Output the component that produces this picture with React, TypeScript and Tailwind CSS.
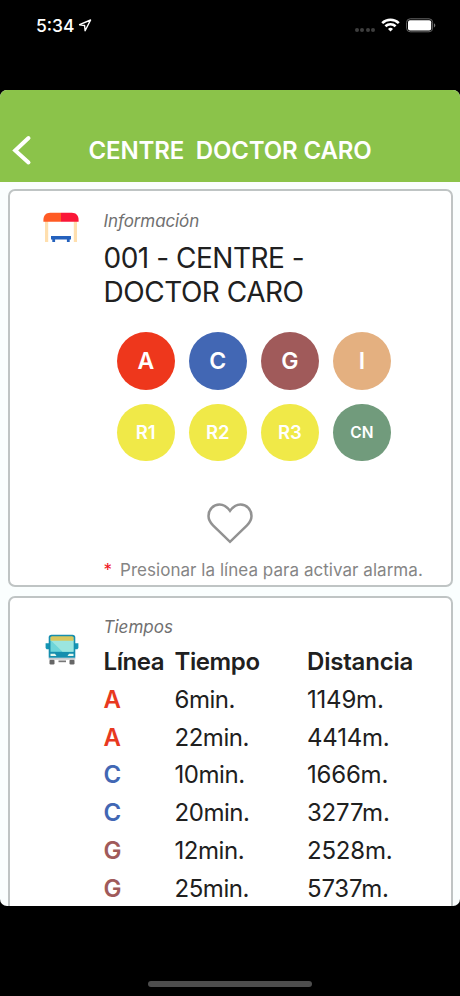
import React from "react";

const lines = [
  { label: "A", className: "bg-[#ee371c] text-[23px] pt-px" },
  { label: "C", className: "bg-[#4267b4] text-[23px] pt-px" },
  { label: "G", className: "bg-[#a05a5a] text-[23px] pt-px" },
  { label: "I", className: "bg-[#e4b080] text-[23px] pt-px" },
  { label: "R1", className: "bg-[#f0e948] text-[18.500px] pt-px" },
  { label: "R2", className: "bg-[#f0e948] text-[18.500px] pt-px" },
  { label: "R3", className: "bg-[#f0e948] text-[18.500px] pt-px" },
  { label: "CN", className: "bg-[#719b7c] text-[15.500px]" },
];

const times = [
  { line: "A", color: "text-[#e8391f]", time: "6min.", distance: "1149m." },
  { line: "A", color: "text-[#e8391f]", time: "22min.", distance: "4414m." },
  { line: "C", color: "text-[#4267b4]", time: "10min.", distance: "1666m." },
  { line: "C", color: "text-[#4267b4]", time: "20min.", distance: "3277m." },
  { line: "G", color: "text-[#a05a5a]", time: "12min.", distance: "2528m." },
  { line: "G", color: "text-[#a05a5a]", time: "25min.", distance: "5737m." },
];

function StatusBar() {
  return (
    <div className="flex h-[90px] shrink-0 items-start pl-9 pr-6 pt-[14px] text-white">
      <span className="w-[39px] text-[17.500px] font-medium leading-6">5:34</span>
      <svg className="ml-[3px] mt-[5px] h-[14px] w-[14px]" viewBox="0 0 14 14" fill="none" stroke="white" strokeWidth="1.4" strokeLinejoin="round">
        <path d="M12.600 1 1.600 5.700l5 .8.500 5.300z" />
      </svg>
      <div className="ml-auto flex items-start">
        <div className="mt-[14px] flex gap-[1.5px]">
          {[0, 1, 2, 3].map((dot) => (
            <span key={dot} className="size-1 rounded-full bg-[#3e3e3e]" />
          ))}
        </div>
        <svg className="ml-[6px] mt-1 h-[14px] w-[19px]" viewBox="0 0 19 14" fill="none" stroke="white" strokeWidth="2.6">
          <path d="M1.2 5.1a12 12 0 0 1 16.6 0" />
          <path d="M4.4 8.3a7.4 7.4 0 0 1 10.2 0" />
          <path d="m9.5 13.5-2.5-2.6a3.7 3.7 0 0 1 5 0z" fill="white" stroke="none" />
        </svg>
        <svg className="ml-[6px] mt-1 h-[15px] w-[30px]" viewBox="0 0 30 15">
          <rect x="0.6" y="0.8" width="26" height="13" rx="3.6" fill="none" stroke="#666" strokeWidth="1" />
          <rect x="2" y="2.2" width="23.2" height="10.2" rx="2" fill="white" />
          <path d="M28 5.2c1.8.8 1.8 3.4 0 4.2z" fill="#777" />
        </svg>
      </div>
    </div>
  );
}

function StopIcon() {
  return (
    <svg className="h-[31px] w-9" viewBox="0 0 36 31">
      <path d="M2 9h3.2v21H2zM30.8 9H34v21h-3.2z" fill="#ffdfae" />
      <path d="M.4 9.8V8C.4 3.6 3 .8 7.2.8H18v9z" fill="#ff5b24" />
      <path d="M18 .8h10.8c4.2 0 6.8 2.8 6.8 7.2v1.8H18z" fill="#fa1737" />
      <path d="M8 24h20v3.600h-1.300V30h-2.800v-2.400H12.100V30H9.300v-2.400H8z" fill="#2461bd" />
    </svg>
  );
}

function BusIcon() {
  return (
    <svg className="h-[31px] w-[34px]" viewBox="0 0 34 31">
      <path d="M.6 9.200h4v6h-3l-1-1.200zM33.400 9.200h-4v6h3l1-1.200z" fill="#1596b5" />
      <rect x="4.500" y="25.500" width="5" height="5" rx="1.200" fill="#666" />
      <rect x="24.500" y="25.500" width="5" height="5" rx="1.200" fill="#666" />
      <path d="M13.500 26.500h7.500v1.700h-7.500z" fill="#777" />
      <rect x="3.500" y="23.800" width="27" height="2" rx="1" fill="#c7cbd0" />
      <path d="M6.500.8h21c1.700 0 2.800 1 2.800 2.800v20.100H3.700V3.600C3.700 1.800 4.800.8 6.500.8z" fill="#168eae" />
      <path d="M5.500 3h23v14.800h-23z" fill="#6dd5d9" />
      <path d="m5.500 6 12 11.800h11V6z" fill="#9be5df" />
      <path d="M7 2.300h20q1.500 0 1.500 1.500v3h-23v-3q0-1.500 1.500-1.500z" fill="#d8c75d" />
      <path d="M5.500 19.800h4.500l1.500 2.200h-6zM28.500 19.800H24L22.500 22h6z" fill="#e5f8ed" />
    </svg>
  );
}

export default function App() {
  return (
    <div className="flex h-[996px] w-[460px] flex-col overflow-hidden bg-black font-['Inter','Liberation_Sans',sans-serif] text-[#202020]">
      <StatusBar />
      <div className="flex h-[816px] shrink-0 flex-col overflow-hidden rounded-[7px] bg-[#fafefe]">
        <header className="flex h-[92px] shrink-0 items-end bg-[#8bc34a] text-white">
          <svg className="mb-4 ml-3 h-[31px] w-5 shrink-0" viewBox="0 0 20 31" fill="none" stroke="white" strokeWidth="4" strokeLinecap="round">
            <path d="M16.500 3 3.200 15.500l13.300 12" />
          </svg>
          <h1 className="mb-[15px] ml-[56.500px] whitespace-pre text-2xl font-semibold leading-8 tracking-[-0.150px]">CENTRE  DOCTOR CARO</h1>
        </header>
        <main className="flex flex-col gap-[9px] px-[7.500px] pt-[7px]">
          <section className="flex h-[398px] shrink-0 rounded-[7px] border-2 border-[#bfc4c4] bg-white">
            <div className="w-[94px] shrink-0 pl-[33px] pt-[21px]">
              <StopIcon />
            </div>
            <div className="flex flex-1 flex-col pt-[19px]">
              <p className="text-[17px] italic leading-[22px] tracking-[-0.1px] text-[#707070]">Información</p>
              <h2 className="mt-[9px] text-[28px] leading-[34px] tracking-[-0.480px]">
                001 - CENTRE -<br />DOCTOR CARO
              </h2>
              <div className="ml-[13.500px] mt-[23px] grid w-[274px] grid-cols-4 gap-x-[14.300px] gap-y-[14px]">
                {lines.map((line) => (
                  <div key={line.label} className={`flex size-[57.500px] items-center justify-center rounded-full font-semibold text-white ${line.className}`}>
                    {line.label}
                  </div>
                ))}
              </div>
              <svg className="ml-[103.500px] mt-[42px] h-[41px] w-[46px]" viewBox="0 0 46 41" fill="none" stroke="#929292" strokeWidth="2.500">
                <path d="M23 7.800C19.500 3 16 1.500 12.500 1.500 6.300 1.500 1.500 6.500 1.500 13c0 3.800 1.800 6.600 4.500 9.300l17 16.500 17-16.500c2.700-2.700 4.500-5.500 4.500-9.300 0-6.500-4.800-11.500-11-11.500C30 1.500 26.500 3 23 7.800z" />
              </svg>
              <p className="mt-[15px] flex whitespace-nowrap text-[17px] leading-[22px] tracking-[0.040px] text-[#858585]">
                <span className="w-[16.500px] text-[#f01522]">*</span>
                <span>Presionar la línea para activar alarma.</span>
              </p>
            </div>
          </section>
          <section className="flex h-[420px] shrink-0 rounded-[7px] border-2 border-[#bfc4c4] bg-white">
            <div className="w-[94px] shrink-0 pl-[35px] pt-[36px]">
              <BusIcon />
            </div>
            <div className="flex-1 pt-[18px]">
              <p className="text-[17px] italic leading-[22px] text-[#707070]">Tiempos</p>
              <div className="mt-[5px] grid grid-cols-[71px_132.500px_1fr] text-2xl leading-[37.750px]">
                <strong className="font-semibold tracking-[-0.400px]">Línea</strong>
                <strong className="font-semibold tracking-[-0.400px]">Tiempo</strong>
                <strong className="font-semibold tracking-[-0.200px]">Distancia</strong>
                {times.map((row) => (
                  <React.Fragment key={row.distance}>
                    <span className={`font-semibold ${row.color}`}>{row.line}</span>
                    <span className="tracking-[-0.450px]">{row.time}</span>
                    <span className="tracking-[-0.200px]">{row.distance}</span>
                  </React.Fragment>
                ))}
              </div>
            </div>
          </section>
        </main>
      </div>
      <div className="mx-auto mt-[75px] h-[6px] w-[164px] rounded-full bg-[#4d4d4d]" />
    </div>
  );
}
